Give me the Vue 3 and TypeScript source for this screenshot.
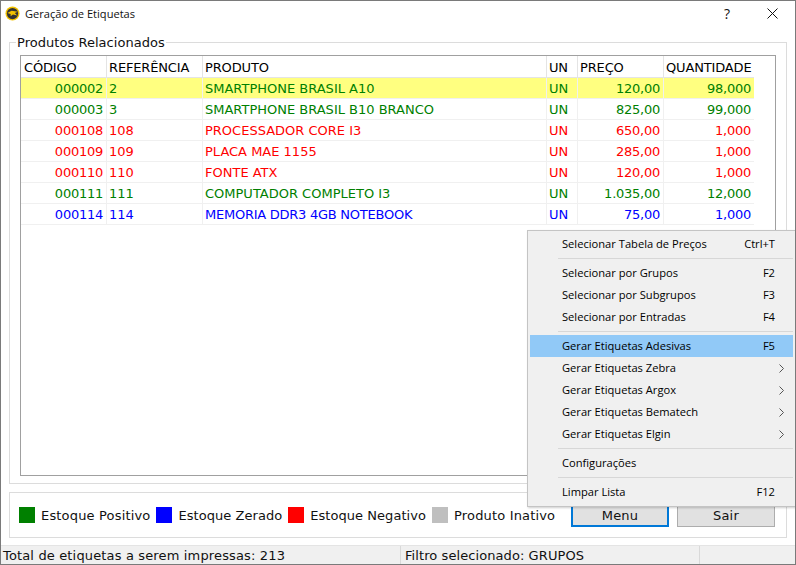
<script setup lang="ts">
interface Row { c: string; r: string; p: string; v: string; q: string; k: string }
const rows: Row[] = [
  { c: '000002', r: '2', p: 'SMARTPHONE BRASIL A10', v: '120,00', q: '98,000', k: 'green sel' },
  { c: '000003', r: '3', p: 'SMARTPHONE BRASIL B10 BRANCO', v: '825,00', q: '99,000', k: 'green' },
  { c: '000108', r: '108', p: 'PROCESSADOR CORE I3', v: '650,00', q: '1,000', k: 'red' },
  { c: '000109', r: '109', p: 'PLACA MAE 1155', v: '285,00', q: '1,000', k: 'red' },
  { c: '000110', r: '110', p: 'FONTE ATX', v: '120,00', q: '1,000', k: 'red' },
  { c: '000111', r: '111', p: 'COMPUTADOR COMPLETO I3', v: '1.035,00', q: '12,000', k: 'green' },
  { c: '000114', r: '114', p: 'MEMORIA DDR3 4GB NOTEBOOK', v: '75,00', q: '1,000', k: 'blue tight' },
]
const legend = [
  { t: 'Estoque Positivo', c: '#008000', k: 'wide' },
  { t: 'Estoque Zerado', c: '#0000ff', k: 'snug' },
  { t: 'Estoque Negativo', c: '#ff0000', k: 'snug' },
  { t: 'Produto Inativo', c: '#bfbfbf', k: 'wide' },
]
interface Item { t?: string; s?: string; sub?: boolean; hi?: boolean; sep?: boolean }
const menu: Item[] = [
  { t: 'Selecionar Tabela de Preços', s: 'Ctrl+T' },
  { sep: true },
  { t: 'Selecionar por Grupos', s: 'F2' },
  { t: 'Selecionar por Subgrupos', s: 'F3' },
  { t: 'Selecionar por Entradas', s: 'F4' },
  { sep: true },
  { t: 'Gerar Etiquetas Adesivas', s: 'F5', hi: true },
  { t: 'Gerar Etiquetas Zebra', sub: true },
  { t: 'Gerar Etiquetas Argox', sub: true },
  { t: 'Gerar Etiquetas Bematech', sub: true },
  { t: 'Gerar Etiquetas Elgin', sub: true },
  { sep: true },
  { t: 'Configurações' },
  { sep: true },
  { t: 'Limpar Lista', s: 'F12' },
]
</script>

<template>
  <div class="win">
    <header class="title">
      <svg class="logo" width="15" height="15" viewBox="0 0 16 16">
        <circle cx="8" cy="8" r="7.5" fill="#f2c200" />
        <circle cx="8" cy="8" r="6" fill="#333" />
        <path d="M2.5 7.5 L7 5 L13.5 6 L10.5 7.5 L13 10 L8.5 9 L6 11 L6 8.5 Z" fill="#f2c200" />
      </svg>
      <span class="title-text">Geração de Etiquetas</span>
      <span class="help">?</span>
      <svg class="close" width="11" height="11" viewBox="0 0 11 11">
        <path d="M0.5 0.5 L10.5 10.5 M10.5 0.5 L0.5 10.5" stroke="#111" stroke-width="1" fill="none" />
      </svg>
    </header>

    <main class="content">
      <section class="group">
        <span class="legend-title">Produtos Relacionados</span>
        <div class="table">
          <div class="row head">
            <div>CÓDIGO</div><div>REFERÊNCIA</div><div>PRODUTO</div><div>UN</div><div>PREÇO</div><div>QUANTIDADE</div>
          </div>
          <div v-for="row in rows" :key="row.c" class="row" :class="row.k">
            <div class="num">{{ row.c }}</div>
            <div>{{ row.r }}</div>
            <div>{{ row.p }}</div>
            <div>UN</div>
            <div class="num">{{ row.v }}</div>
            <div class="num">{{ row.q }}</div>
          </div>
        </div>
      </section>

      <section class="bottom">
        <div class="keys">
          <div v-for="l in legend" :key="l.t" class="key" :class="l.k">
            <i class="swatch" :style="{ background: l.c }"></i>
            <span>{{ l.t }}</span>
          </div>
        </div>
        <div class="buttons">
          <button class="btn focus">Menu</button>
          <button class="btn">Sair</button>
        </div>
      </section>
    </main>

    <footer class="status">
      <div class="s1">Total de etiquetas a serem impressas: 213</div>
      <div class="s2">Filtro selecionado: GRUPOS</div>
      <div class="s3"></div>
    </footer>

    <nav class="menu">
      <template v-for="(m, i) in menu" :key="i">
        <div v-if="m.sep" class="sep"></div>
        <div v-else class="item" :class="{ hi: m.hi }">
          <span>{{ m.t }}</span>
          <span v-if="m.s" class="short">{{ m.s }}</span>
          <svg v-if="m.sub" class="arrow" width="5" height="9" viewBox="0 0 5 9">
            <path d="M0.5 0.5 L4.5 4.5 L0.5 8.5" stroke="#555" fill="none" />
          </svg>
        </div>
      </template>
    </nav>
  </div>
</template>

<style>
html, body { margin: 0; padding: 0; background: #fff; }
</style>

<style scoped>
.win {
  position: relative;
  box-sizing: border-box;
  width: 796px;
  height: 565px;
  border: 1px solid #7a7a7a;
  background: #fff;
  display: flex;
  flex-direction: column;
  font-family: "DejaVu Sans", sans-serif;
  font-size: 13px;
  color: #000;
  overflow: hidden;
}
.title {
  height: 24px;
  flex: none;
  display: flex;
  align-items: center;
  padding-left: 4px;
  font-family: "Open Sans", sans-serif;
  font-size: 11.1px;
  color: #111;
}
.logo { flex: none; margin-right: 5px; }
.title-text { flex: 1; }
.help { margin-right: 37px; font-size: 14px; }
.close { margin-right: 17px; }
.content {
  flex: 1;
  display: flex;
  flex-direction: column;
  padding: 17px 8px 6px;
  gap: 8px;
  min-height: 0;
}
.group {
  position: relative;
  box-sizing: border-box;
  height: 442px;
  flex: none;
  border: 1px solid #dcdcdc;
  padding: 12px 10px 7px;
}
.legend-title {
  position: absolute;
  left: 6px;
  top: -8px;
  background: #fff;
  padding: 0 1px;
  line-height: 15px;
  color: #111;
  letter-spacing: 0.04px;
}
.table {
  box-sizing: border-box;
  height: 421px;
  border: 1px solid #a0a0a0;
}
.row {
  display: grid;
  grid-template-columns: 85px 95px 343px 30px 85px 90px;
  column-gap: 1px;
  width: 733px;
  height: 20px;
  margin-bottom: 1px;
  line-height: 22px;
  box-shadow: 0 1px 0 #f0f0f0;
  background: #f0f0f0;
}
.row > div {
  background: #fff;
  padding: 0 3px 0 2px;
  white-space: nowrap;
  overflow: hidden;
}
.row > div:first-child { padding-left: 3px; }
.row.head { height: 21px; background: #e4e4e4; box-shadow: 0 1px 0 #e4e4e4; letter-spacing: -0.15px; }
.row.head > div { line-height: 24px; }
.row.tight > div:nth-child(3) { letter-spacing: -0.25px; }
.num { text-align: right; letter-spacing: -0.25px; }
.green > div { color: #008000; }
.red > div { color: #ff0000; }
.blue > div { color: #0000ff; }
.sel > div { background: #ffff80; }
.bottom {
  box-sizing: border-box;
  height: 46px;
  flex: none;
  border: 1px solid #dcdcdc;
  display: flex;
  align-items: center;
  padding: 0 11px 0 9px;
  justify-content: space-between;
}
.keys { display: flex; gap: 6px; }
.key { display: flex; align-items: center; gap: 6px; color: #111; }
.key.wide { letter-spacing: 0.17px; }
.key.snug { letter-spacing: 0.05px; }
.swatch { display: block; width: 16px; height: 16px; }
.buttons { display: flex; gap: 8px; align-self: flex-end; margin-bottom: 10px; }
.btn {
  box-sizing: border-box;
  width: 98px;
  height: 24px;
  background: #e1e1e1;
  border: 1px solid #adadad;
  font: 13px "DejaVu Sans", sans-serif;
  letter-spacing: 0.2px;
  color: #111;
  padding: 0;
}
.btn.focus { border: 2px solid #0078d7; }
.status {
  flex: none;
  height: 18px;
  display: flex;
  background: #f0f0f0;
  line-height: 20px;
  border-top: 1px solid #e4e4e4;
  color: #111;
}
.s1 { width: 400px; padding-left: 2px; box-sizing: border-box; border-right: 1px solid #d9d9d9; white-space: nowrap; letter-spacing: 0.15px; }
.s2 { width: 299px; padding-left: 4px; box-sizing: border-box; border-right: 1px solid #d9d9d9; letter-spacing: 0.08px; }
.s3 { flex: 1; }
.menu {
  position: absolute;
  left: 526px;
  top: 229px;
  width: 269px;
  box-sizing: border-box;
  height: 277px;
  background: #f0f0f0;
  border: 1px solid #c4c4c4;
  padding: 2px;
  font-family: "Open Sans", sans-serif;
  font-size: 11.15px;
  color: #000;
  box-shadow: 1px 1px 2px rgba(0,0,0,.2);
}
.item {
  position: relative;
  height: 22px;
  line-height: 22px;
  padding-left: 32px;
  padding-right: 18px;
  display: flex;
  justify-content: space-between;
  white-space: nowrap;
}
.item.hi { background: #91c9f7; }
.sep {
  height: 1px;
  background: #d7d7d7;
  margin: 3px 0 3px 28px;
}
.arrow { position: absolute; right: 9px; top: 7px; }
</style>
